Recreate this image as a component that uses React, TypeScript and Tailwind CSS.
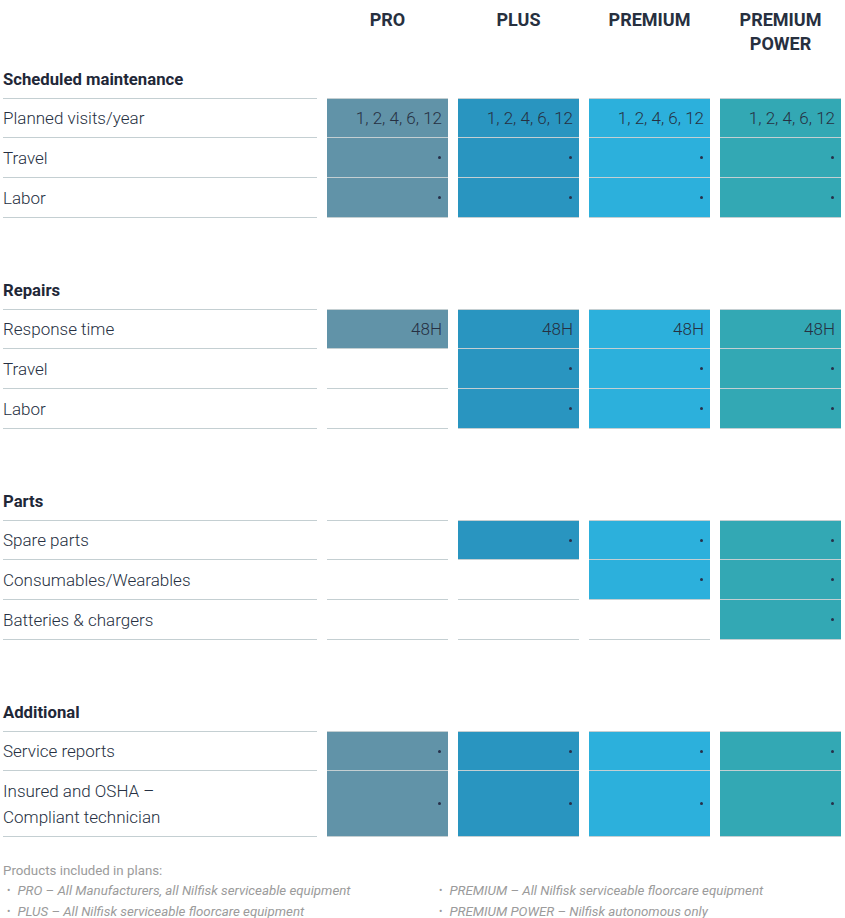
import React from "react";

type Cell = string | null;

interface Row {
  label: React.ReactNode;
  cells: Cell[];
  tall?: boolean;
}

interface Section {
  title: string;
  rows: Row[];
}

const DOT = "dot";

const plans = ["PRO", "PLUS", "PREMIUM", "PREMIUM POWER"];

// background per plan column
const planBg = ["bg-[#6193a8]", "bg-[#2995c0]", "bg-[#2cb0dc]", "bg-[#33a8b4]"];

const visits = "1, 2, 4, 6, 12";

const sections: Section[] = [
  {
    title: "Scheduled maintenance",
    rows: [
      { label: "Planned visits/year", cells: [visits, visits, visits, visits] },
      { label: "Travel", cells: [DOT, DOT, DOT, DOT] },
      { label: "Labor", cells: [DOT, DOT, DOT, DOT] },
    ],
  },
  {
    title: "Repairs",
    rows: [
      { label: "Response time", cells: ["48H", "48H", "48H", "48H"] },
      { label: "Travel", cells: [null, DOT, DOT, DOT] },
      { label: "Labor", cells: [null, DOT, DOT, DOT] },
    ],
  },
  {
    title: "Parts",
    rows: [
      { label: "Spare parts", cells: [null, DOT, DOT, DOT] },
      { label: "Consumables/Wearables", cells: [null, null, DOT, DOT] },
      { label: "Batteries & chargers", cells: [null, null, null, DOT] },
    ],
  },
  {
    title: "Additional",
    rows: [
      { label: "Service reports", cells: [DOT, DOT, DOT, DOT] },
      {
        label: (
          <>
            Insured and OSHA –<br />
            Compliant technician
          </>
        ),
        cells: [DOT, DOT, DOT, DOT],
        tall: true,
      },
    ],
  },
];

const footnotes = [
  "PRO – All Manufacturers, all Nilfisk serviceable equipment",
  "PREMIUM – All Nilfisk serviceable floorcare equipment",
  "PLUS – All Nilfisk serviceable floorcare equipment",
  "PREMIUM POWER – Nilfisk autonomous only",
];

function ValueCell({ value, col, first, tall }: { value: Cell; col: number; first: boolean; tall?: boolean }) {
  const bg = value ? planBg[col] : "";
  return (
    <div
      className={`flex items-center justify-end border-b border-[#c4cfd2] pr-[6px] ${tall ? "h-[66px]" : "h-[40px]"} ${
        first ? "border-t" : ""
      } ${bg}`}
    >
      {value === DOT ? (
        <span className="mr-[1px] block h-[3px] w-[3px] rounded-full bg-[#27304a]" />
      ) : value ? (
        <span className="pt-[2px] text-[17px] font-light text-[#263042]">{value}</span>
      ) : null}
    </div>
  );
}

export default function App() {
  return (
    <div
      className="w-[845px] bg-white pl-[3px] pr-[4px] pt-[8px] text-[#263042]"
      style={{ fontFamily: "Roboto, 'Open Sans', sans-serif" }}
    >
      <div className="grid grid-cols-[314px_121px_121px_121px_121px] gap-x-[10px]">
        {/* header */}
        <div />
        {plans.map((p) => (
          <div key={p} className="text-center text-[18px] font-bold uppercase leading-[24px] text-[#27303f]">
            {p === "PREMIUM POWER" ? (
              <>
                PREMIUM
                <br />
                POWER
              </>
            ) : (
              p
            )}
          </div>
        ))}

        {sections.map((section, si) => (
          <React.Fragment key={section.title}>
            <div
              className={`col-span-5 pb-[6px] text-[16.7px] font-bold leading-[24px] text-[#1f2838] ${
                si === 0 ? "mt-[12px]" : "mt-[61px]"
              }`}
            >
              {section.title}
            </div>
            {section.rows.map((row, ri) => (
              <React.Fragment key={ri}>
                <div
                  className={`flex items-center border-b border-[#c4cfd2] text-[17px] font-light ${
                    row.tall ? "h-[66px] leading-[26px]" : "h-[40px] pt-[2px]"
                  } ${ri === 0 ? "border-t" : ""}`}
                >
                  <div>{row.label}</div>
                </div>
                {row.cells.map((c, ci) => (
                  <ValueCell key={ci} value={c} col={ci} first={ri === 0} tall={row.tall} />
                ))}
              </React.Fragment>
            ))}
          </React.Fragment>
        ))}
      </div>

      <div className="mt-[24px] text-[13.3px] text-[#9b9b9b]">
        <p className="leading-[19px]">Products included in plans:</p>
        <ul className="grid grid-cols-[432px_1fr] italic leading-[21px]">
          {footnotes.map((f) => (
            <li key={f} className="flex items-center gap-[7px] pl-[4px]">
              <span className="not-italic text-[10px]">•</span>
              <span>{f}</span>
            </li>
          ))}
        </ul>
      </div>
    </div>
  );
}
